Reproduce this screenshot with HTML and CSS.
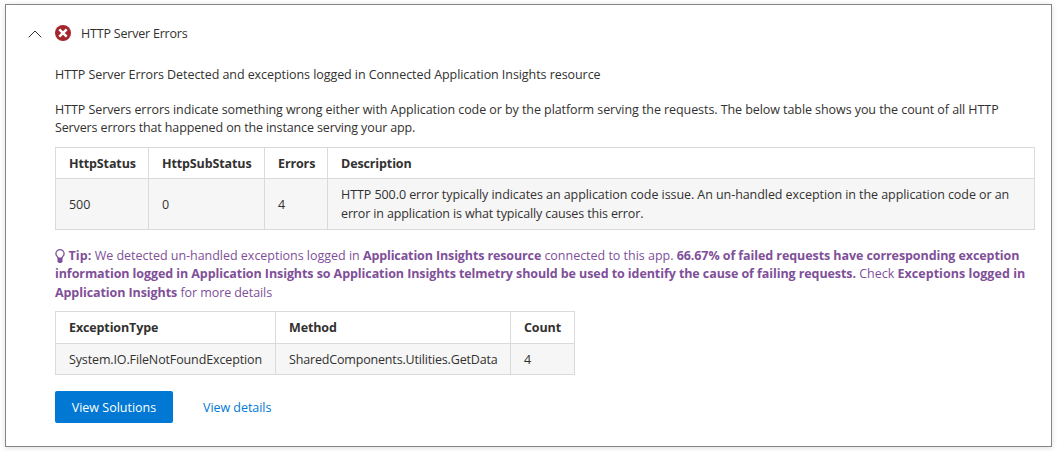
FILE: index.html
```html
<!DOCTYPE html>
<html lang="en">
<head>
<meta charset="utf-8">
<title>HTTP Server Errors</title>
<link rel="stylesheet" href="styles.css">
</head>
<body>
<main class="card">
  <header class="card-header">
    <svg class="chevron" viewBox="0 0 14 8"><path d="M.7 7.3 7 1l6.300 6.300"/></svg>
    <svg class="error-icon" viewBox="0 0 16 16"><circle cx="8" cy="8" r="8"/><path d="m4.300 4.300 7.400 7.400m0-7.400-7.400 7.400"/></svg>
    <h1 class="title">HTTP Server Errors</h1>
  </header>
  <section class="content">
    <p class="summary">HTTP Server Errors Detected and exceptions logged in Connected Application Insights resource</p>
    <p class="intro">HTTP Servers errors indicate something wrong either with Application code or by the platform serving the requests. The below table shows you the count of all HTTP<br><span class="tight">Servers errors that happened on the instance serving your app.</span></p>
    <table class="grid errors">
      <colgroup><col class="c-status"><col class="c-sub"><col class="c-errors"><col></colgroup>
      <thead><tr><th>HttpStatus</th><th>HttpSubStatus</th><th>Errors</th><th>Description</th></tr></thead>
      <tbody><tr><td>500</td><td>0</td><td>4</td><td>HTTP 500.0 error typically indicates an application code issue. An un-handled exception in the application code or an<br><span class="tight">error in application is what typically causes this error.</span></td></tr></tbody>
    </table>
    <p class="tip"><svg class="bulb" viewBox="0 0 10 14"><path class="glass" d="M3.200 9.500C3.200 7.600.9 7.100.9 4.800a4.100 4.100 0 0 1 8.200 0C9.100 7.100 6.800 7.600 6.800 9.500"/><path class="base" d="M2.500 8.600h5v3.700L6.300 14H3.700l-1.200-1.700Z"/></svg><b>Tip:</b> We detected un-handled exceptions logged in <b class="lead">Application Insights resource</b> connected to this app. <b>66.67% of failed requests have corresponding exception</b><br><b>information logged in Application Insights so Application Insights telmetry should be used to identify the cause of failing requests.</b> Check <b class="loose">Exceptions logged in</b><br><b>Application Insights</b> <span class="ending">for more details</span></p>
    <table class="grid exceptions">
      <colgroup><col class="c-type"><col class="c-method"><col class="c-count"></colgroup>
      <thead><tr><th>ExceptionType</th><th>Method</th><th>Count</th></tr></thead>
      <tbody><tr><td class="tight">System.IO.FileNotFoundException</td><td class="method">SharedComponents.Utilities.GetData</td><td>4</td></tr></tbody>
    </table>
    <div class="actions"><button class="primary">View Solutions</button><a class="link">View details</a></div>
  </section>
</main>
</body>
</html>
```
FILE: styles.css
```css
* { box-sizing: border-box; }
body { margin: 0; padding: 4px 5px; background: #fff; color: #323130; font: 12.5px/18.500px "Open Sans", sans-serif; white-space: nowrap; }
.card { width: 1047px; height: 443px; border: 1px solid #858585; padding: 0 16px 0 22px; box-shadow: 0 1px 6px rgba(0,0,0,.13); }
.card-header { display: flex; align-items: center; height: 57px; }
.chevron { width: 14px; height: 8px; margin-top: 1px; margin-left: -.5px; fill: none; stroke: #323130; }
.error-icon { width: 16px; height: 16px; margin: -1px 0 0 13.5px; fill: #a4262c; }
.error-icon path { stroke: #fff; stroke-width: 2.500; }
.title { margin: 0 0 0 10px; padding-top: 2px; font-size: inherit; font-weight: 400; letter-spacing: -.2px; }
.content { padding-left: 27px; }
p { margin: 0; }
.summary { margin-top: 4px; letter-spacing: -.066px; }
.intro { margin-top: 16.5px; margin-bottom: 9.5px; line-height: 18px; letter-spacing: -.07px; }
.tight { letter-spacing: -.13px; }
.grid { border-collapse: collapse; table-layout: fixed; }
.grid th, .grid td { border: 1px solid #dadada; padding: 7px 13px 5px; height: 31px; text-align: left; }
.grid th { letter-spacing: -.12px; }
.grid td { background: #f6f6f6; }
.errors th { line-height: 18px; }
.errors td { height: 51px; letter-spacing: -.066px; }
.errors td:not(:last-child) { padding: 8px 13px 4px; }
.errors { width: 980px; height: 83px; }
.c-status { width: 93px; } .c-sub { width: 116px; } .c-errors { width: 63px; }
.tip { color: #804f99; margin-top: 17px; letter-spacing: -.02px; line-height: 18.500px; }
.tip b { letter-spacing: -.08px; }
.tip b:first-of-type { letter-spacing: .1px; }
.tip b.lead { letter-spacing: -.12px; }
.tip b.loose { letter-spacing: .05px; }
.ending { letter-spacing: -.08px; }
.bulb { width: 10px; height: 14px; margin-right: 3.500px; vertical-align: -3px; }
.glass { fill: none; stroke: currentColor; stroke-width: 1.300; } .base { fill: currentColor; }
.exceptions { width: 520px; height: 64px; margin-top: 8.800px; }
.exceptions th { height: 32px; padding: 7px 13px 5px; }
.exceptions td { line-height: 18px; }
.exceptions .tight { letter-spacing: -.13px; }
.exceptions .method { letter-spacing: -.17px; }
.c-type { width: 220px; } .c-method { width: 235px; } .c-count { width: 64px; }
.actions { display: flex; align-items: center; margin-top: 16px; }
.primary { width: 118px; height: 32px; border: 0; border-radius: 2px; background: #0078d4; color: #fff; font: inherit; padding: 2px 0 0; }
.link { margin-left: 30px; padding-top: 2px; color: #0078d4; letter-spacing: -.05px; }
```
